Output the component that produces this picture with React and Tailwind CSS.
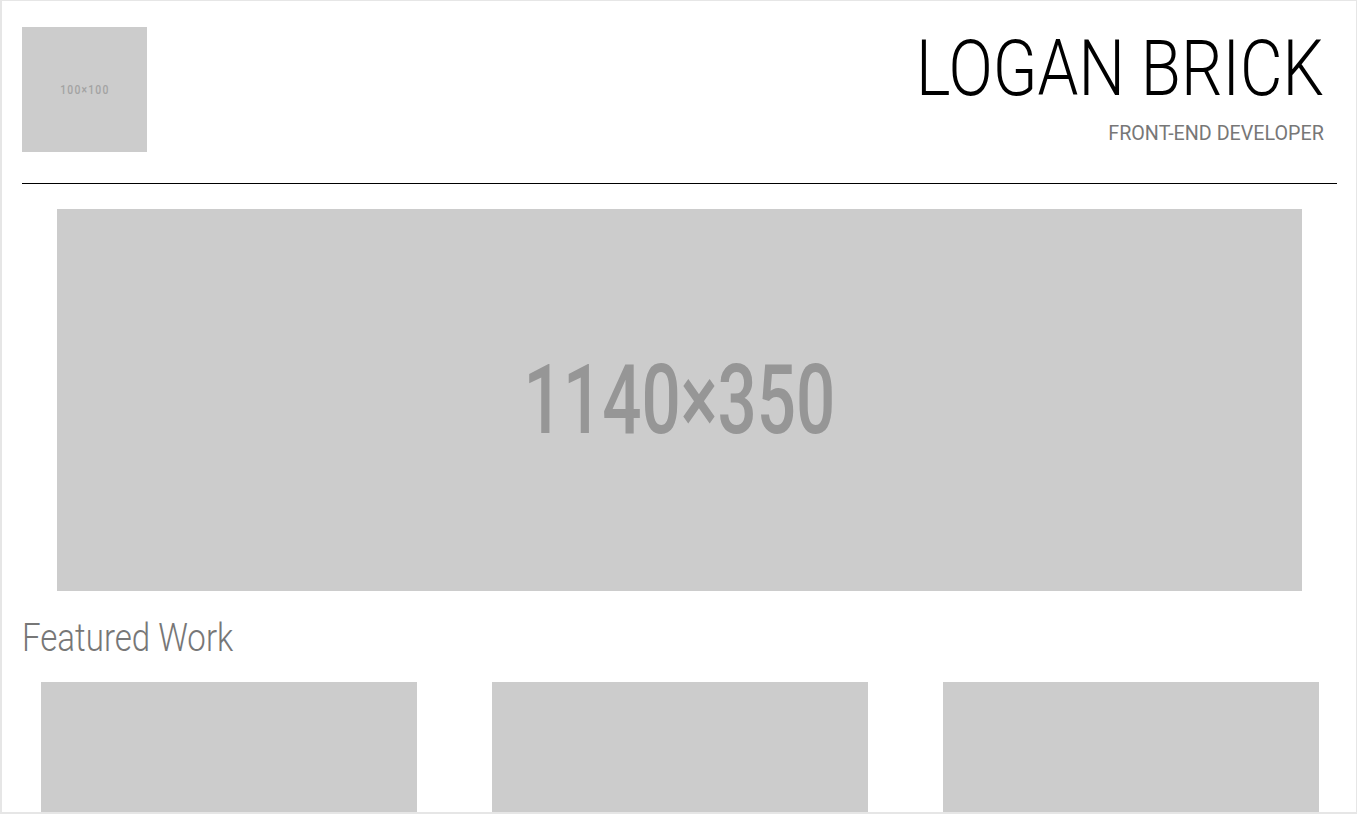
import React from 'react';

const works = [1, 2, 3];

export default function App() {
  return (
    <div className="min-h-screen bg-[#e6e6e6] pl-[2px] pt-[1px] pr-[1px] pb-[2px]">
      <div className="h-[811px] overflow-hidden bg-white pl-[20px] pr-[19px] pt-[26px] font-['Roboto',sans-serif]">
        {/* Header */}
        <header className="flex items-start justify-between border-b border-black pb-[31px]">
          <div className="flex h-[125px] w-[125px] items-center justify-center bg-[#cccccc]">
            <span className="inline-block origin-center scale-x-[0.8] text-[13px] font-medium tracking-[1.5px] text-[#a3a3a3]">
              100×100
            </span>
          </div>
          <div className="flex flex-col items-end pr-[13px] pt-[4px]">
            <h1 className="origin-right scale-x-[0.85] whitespace-nowrap text-[77px] font-light leading-none text-black">
              LOGAN BRICK
            </h1>
            <p className="mt-[15px] origin-right scale-x-[0.985] whitespace-nowrap text-[20px] leading-none text-[#777777]">
              FRONT-END DEVELOPER
            </p>
          </div>
        </header>

        {/* Hero */}
        <div className="mx-[35px] mt-[25px] flex h-[382px] items-center justify-center bg-[#cccccc]">
          <span className="inline-block scale-x-[0.72] text-[96px] font-medium leading-none text-[#969696]">
            1140×350
          </span>
        </div>

        {/* Featured work */}
        <h2 className="mt-[28px] origin-left scale-x-[0.87] whitespace-nowrap text-[38px] font-light leading-none text-[#777777]">
          Featured Work
        </h2>
        <div className="mt-[25px] flex justify-between pl-[19px] pr-[18px]">
          {works.map((w) => (
            <div key={w} className="h-[250px] w-[376px] bg-[#cccccc]" />
          ))}
        </div>
      </div>
    </div>
  );
}
